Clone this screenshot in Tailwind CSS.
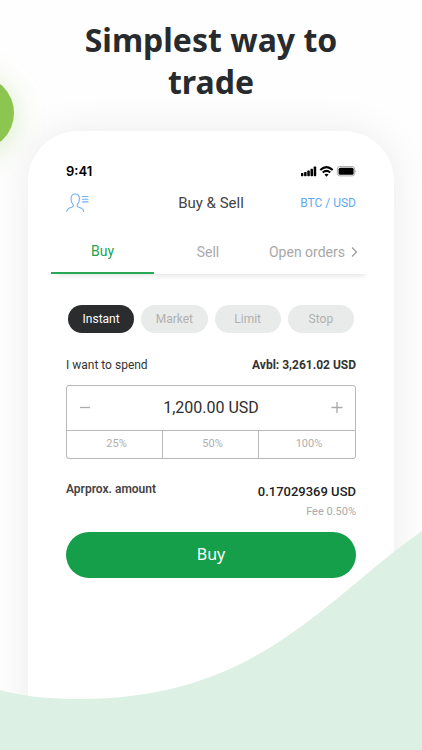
<!DOCTYPE html>
<html lang="en">
<head>
<meta charset="utf-8">
<meta name="viewport" content="width=device-width, initial-scale=1">
<title>Simplest way to trade</title>
<script src="https://cdn.jsdelivr.net/npm/@tailwindcss/browser@4"></script>
</head>
<body class="bg-[#fefefe] font-['Roboto',sans-serif]">
<main class="relative flex min-h-screen flex-col overflow-hidden px-7 pt-[19px]">
  <div class="absolute top-[76px] -left-[60px] size-[74px] rounded-full bg-[#8cc550] shadow-[0_4px_30px_rgba(140,197,80,0.35)]"></div>

  <h1 class="mx-auto mb-7 max-w-[300px] text-center font-['Noto_Sans',sans-serif] text-[32px] leading-[42px] font-bold text-[#282b2e]">Simplest way to trade</h1>

  <section class="relative flex grow flex-col rounded-t-[50px] bg-white px-[38px] pt-[33px] pb-40 shadow-[0_0_40px_rgba(0,0,0,0.08)]">
    <div class="flex h-4 items-center justify-between">
      <span class="font-['Inter',sans-serif] text-[13px] font-semibold text-black">9:41</span>
      <svg class="h-3 w-[57px]" viewBox="0 0 57 12" role="img" aria-label="Signal, Wi-Fi and battery">
        <g fill="#000">
          <rect x="2" y="7" width="2.400" height="3.200" rx=".7"/><rect x="5.100" y="6" width="2.500" height="4.200" rx=".7"/><rect x="8.300" y="4.500" width="2.500" height="5.700" rx=".7"/><rect x="11.500" y="2.700" width="2.500" height="7.500" rx=".7"/><rect x="14.700" y="0.500" width="2.500" height="9.700" rx=".7"/>
          <rect x="39.600" y="1.700" width="15" height="7" rx="1.500"/>
        </g>
        <g fill="none" stroke="#000" stroke-width="2"><path d="M21.300 4 Q27.500 -1.800 33.700 4"/><path d="M23.700 6.600 Q27.500 3.200 31.300 6.600"/></g>
        <path d="M25.500 8.500 Q27.500 7 29.500 8.500 L27.500 10.700Z"/>
        <rect x="38.300" y=".5" width="17.300" height="9.400" rx="2.500" fill="none" stroke="#999" stroke-width=".8"/>
        <path d="M56.200 3.700 Q57.400 5.200 56.200 6.700Z" fill="#999"/>
      </svg>
    </div>

    <header class="mt-[7px] grid h-8 grid-cols-[1fr_auto_1fr] items-center">
      <button type="button" aria-label="Account" class="w-6">
        <svg class="h-5 w-6" viewBox="0 0 24 20" fill="none" stroke="#6fb0ef" stroke-width="1.100" stroke-linecap="round" stroke-linejoin="round"><path d="M.8 18.500 C.8 16.500 1.500 15.800 3 15.200 L6 14.100 C7.500 13.500 7.700 12.200 6.800 11.200 C5.300 9.600 5 7.800 5 5.800 C5 2.800 6.500 1 9.200 1 S13.400 2.800 13.400 5.800 C13.400 7.800 13.100 9.600 11.600 11.200 C10.700 12.200 10.900 13.500 12.400 14.100 L15.400 15.200 C17 15.800 17.600 16.500 17.600 18.500"/><path d="M16.500 3.500h5.500M16.500 6.200h5.500M16.500 8.900h5.500"/></svg>
      </button>
      <h2 class="text-[15px] text-[#444]">Buy &amp; Sell</h2>
      <button type="button" class="justify-self-end text-[12px] text-[#62aaf0]">BTC / USD</button>
    </header>

    <nav class="-mx-[15px] mt-[11px] grid h-11 grid-cols-[103fr_107fr_109fr] shadow-[0_7px_6px_-6px_rgba(0,0,0,0.14)]">
      <button type="button" class="border-b-2 border-[#2ba856] text-sm text-[#22a34f]">Buy</button>
      <button type="button" class="text-sm text-[#aaa]">Sell</button>
      <a href="#orders" class="flex items-center justify-end gap-1.5 pr-3 text-sm whitespace-nowrap text-[#a8a8a8]">Open orders
        <svg class="h-3 w-2" viewBox="0 0 8 12" fill="none" stroke="#999" stroke-width="1.200"><path d="M1 1.500l4.500 4.500-4.500 4.500"/></svg>
      </a>
    </nav>

    <div class="mt-[31px] grid grid-cols-4 gap-[7px] px-0.5 text-[12px]">
      <button type="button" class="h-7 rounded-full bg-[#2a2c2e] text-white">Instant</button>
      <button type="button" class="h-7 rounded-full bg-[#e9ebea] text-[#b0b0b0]">Market</button>
      <button type="button" class="h-7 rounded-full bg-[#e9ebea] text-[#b0b0b0]">Limit</button>
      <button type="button" class="h-7 rounded-full bg-[#e9ebea] text-[#b0b0b0]">Stop</button>
    </div>

    <div class="mt-6 flex h-4 items-center justify-between whitespace-nowrap text-[#333]">
      <label for="spend" class="text-[12px]">I want to spend</label>
      <span class="text-[12px] font-bold">Avbl: 3,261.02 USD</span>
    </div>

    <div class="mt-3 rounded-[3px] border border-[#b8b8b8]">
      <div class="flex h-11 items-center justify-between px-3">
        <button type="button" aria-label="Decrease"><svg class="size-3" viewBox="0 0 12 12" stroke="#aaa" stroke-width="1.300"><path d="M1 5.500h10"/></svg></button>
        <input id="spend" type="text" value="1,200.00 USD" class="min-w-0 grow text-center text-base text-[#2e2e2e]">
        <button type="button" aria-label="Increase"><svg class="size-3" viewBox="0 0 12 12" stroke="#aaa" stroke-width="1.300"><path d="M.5 5.500h11M6 0v11"/></svg></button>
      </div>
      <div class="grid h-7 grid-cols-3 divide-x divide-[#b8b8b8] border-t border-[#b8b8b8] text-[11px] text-[#b0b0b0]">
        <button type="button" class="pl-1">25%</button>
        <button type="button" class="pl-1">50%</button>
        <button type="button" class="pl-1">100%</button>
      </div>
    </div>

    <div class="mt-[22px] flex justify-between whitespace-nowrap">
      <p class="text-[12px] leading-4 font-semibold text-[#444]">Aprprox. amount</p>
      <div class="pt-[3px] text-right">
        <p class="text-[13px] leading-4 font-medium text-[#222]">0.17029369 USD</p>
        <p class="mt-1 text-[11px] leading-4 text-[#aaa]">Fee 0.50%</p>
      </div>
    </div>

    <button type="button" class="mt-3 h-[46px] w-full rounded-full bg-[#169f4a] pb-0.5 font-['Noto_Sans',sans-serif] text-base text-white">Buy</button>
  </section>

  <svg class="pointer-events-none absolute bottom-0 left-0 h-[220px] w-full" viewBox="0 0 422 220" preserveAspectRatio="none" aria-hidden="true"><path fill="#dcf0e3" d="M0 160 C25 167 52 169 80 169 C225 169 295 103 368 43 Q396 19 422 1 V220 H0Z"/></svg>
</main>
</body>
</html>
